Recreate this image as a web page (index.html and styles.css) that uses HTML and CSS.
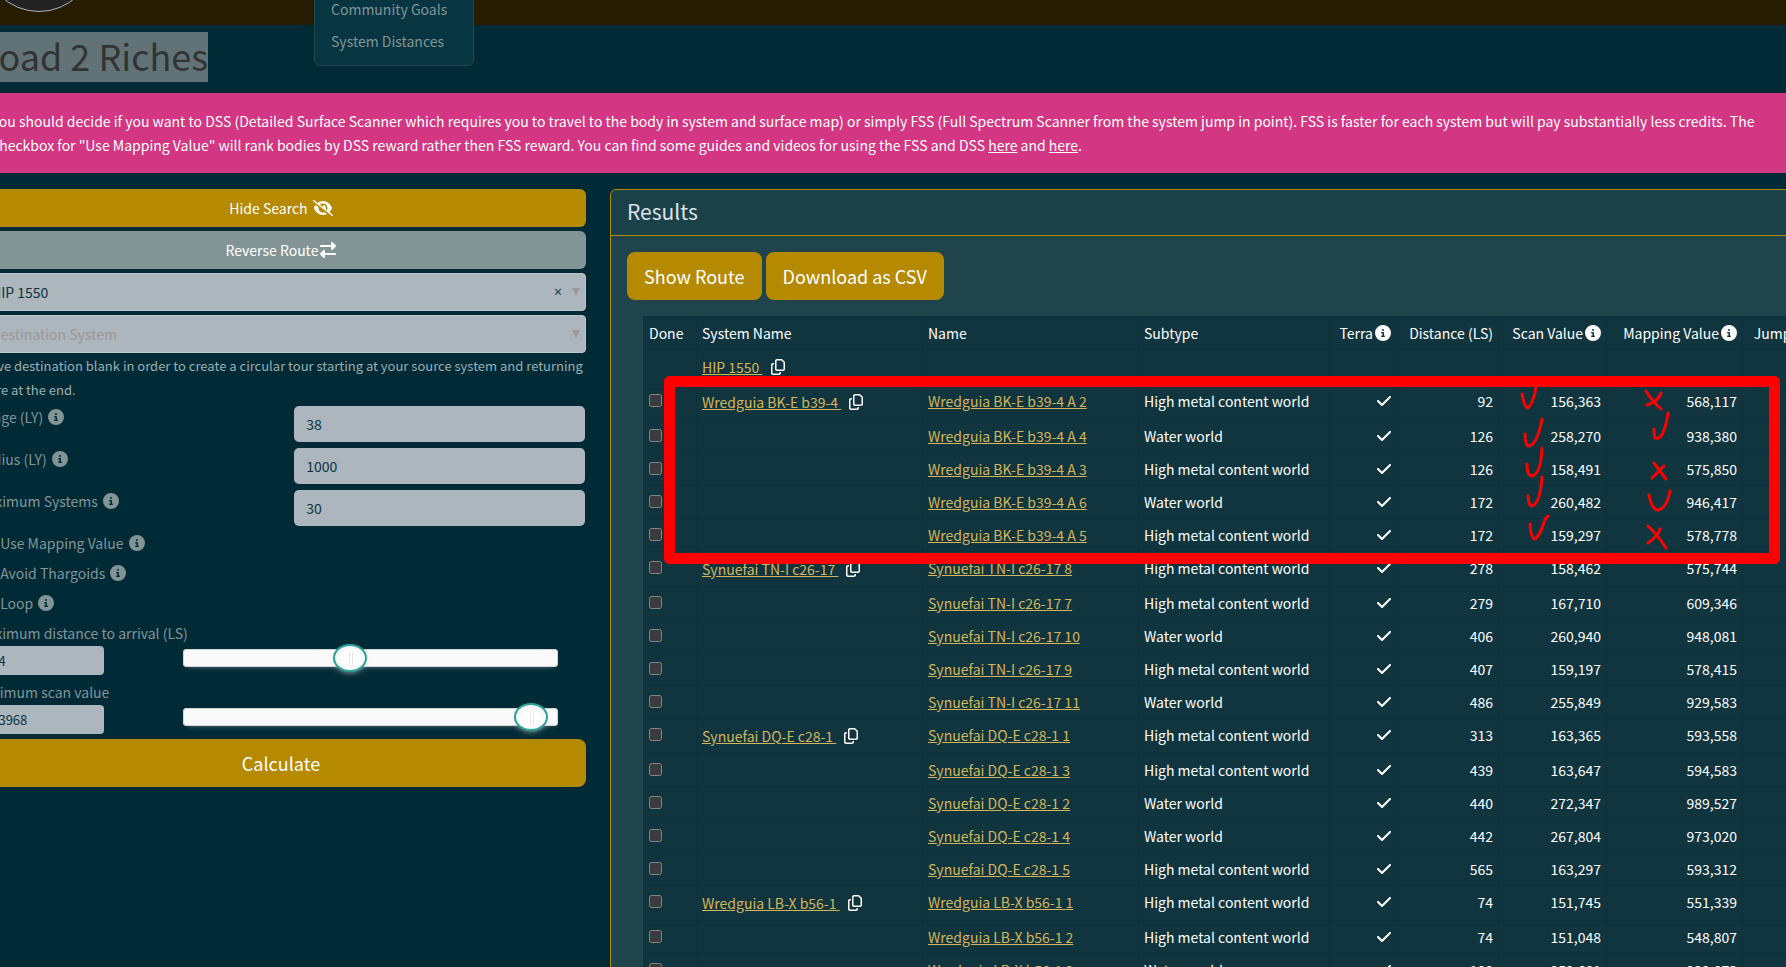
FILE: index.html
```html
<!DOCTYPE html>
<html lang="en">
<head>
  <meta charset="UTF-8">
  <meta name="viewport" content="width=device-width, initial-scale=1.0">
  <title>Road 2 Riches</title>
  <link rel="stylesheet" href="styles.css">
</head>
<body>
  <svg class="sprite" aria-hidden="true">
    <symbol id="info" viewBox="0 0 512 512"><path d="M256 512A256 256 0 1 0 256 0a256 256 0 1 0 0 512zM216 336h24V272H216c-13.300 0-24-10.700-24-24s10.700-24 24-24h48c13.300 0 24 10.700 24 24v88h8c13.300 0 24 10.700 24 24s-10.700 24-24 24H216c-13.300 0-24-10.700-24-24s10.700-24 24-24zm40-208a32 32 0 1 1 0 64 32 32 0 1 1 0-64z"/></symbol>
    <symbol id="check" viewBox="0 0 448 512"><path d="M438.600 105.400c12.500 12.500 12.500 32.800 0 45.300l-256 256c-12.500 12.500-32.800 12.500-45.300 0l-128-128c-12.500-12.500-12.500-32.800 0-45.300s32.800-12.500 45.300 0L160 338.700 393.400 105.400c12.500-12.500 32.800-12.500 45.300 0z"/></symbol>
    <symbol id="copy" viewBox="0 0 448 512"><path d="M384 336H192c-8.800 0-16-7.200-16-16V64c0-8.800 7.200-16 16-16l140.100 0L400 115.900V320c0 8.800-7.200 16-16 16zM192 384H384c35.300 0 64-28.700 64-64V115.900c0-12.700-5.100-24.900-14.100-33.900L366.100 14.100c-9-9-21.200-14.100-33.900-14.100H192c-35.300 0-64 28.700-64 64V320c0 35.300 28.700 64 64 64zM64 128c-35.300 0-64 28.700-64 64V448c0 35.300 28.700 64 64 64H256c35.300 0 64-28.700 64-64V416H272v32c0 8.800-7.200 16-16 16H64c-8.800 0-16-7.200-16-16V192c0-8.800 7.200-16 16-16H96V128H64z"/></symbol>
    <symbol id="eye-slash" viewBox="0 0 640 512"><path d="M38.800 5.100C28.400-3.100 13.300-1.200 5.100 9.200S-1.200 34.700 9.200 42.900l592 464c10.400 8.200 25.500 6.300 33.700-4.100s6.300-25.500-4.100-33.700L525.600 386.700c39.600-40.600 66.400-86.100 79.900-118.400c3.300-7.900 3.300-16.700 0-24.600c-14.900-35.700-46.200-87.700-93-131.100C465.500 68.800 400.800 32 320 32c-68.200 0-125 26.300-169.300 60.800L38.800 5.100zM223.100 149.500C248.600 126.200 282.700 112 320 112c79.500 0 144 64.500 144 144c0 24.900-6.300 48.300-17.400 68.700L408 294.500c8.400-19.300 10.600-41.400 4.800-63.300c-11.100-41.500-47.800-69.400-88.600-71.100c-5.800-.2-9.200 6.100-7.400 11.700c2.100 6.400 3.300 13.200 3.300 20.300c0 10.200-2.400 19.800-6.600 28.300l-90.300-70.800zM373 389.900c-16.400 6.500-34.300 10.100-53 10.100c-79.500 0-144-64.500-144-144c0-6.900 .5-13.600 1.400-20.200L83.100 161.500C60.300 191.200 44 220.800 34.500 243.700c-3.300 7.900-3.300 16.700 0 24.600c14.900 35.700 46.200 87.700 93 131.100C174.500 443.200 239.200 480 320 480c47.800 0 89.900-12.900 126.200-32.500L373 389.900z"/></symbol>
    <symbol id="swap" viewBox="0 0 512 512"><path d="M32 96l320 0V32c0-12.900 7.800-24.600 19.800-29.600s25.700-2.200 34.900 6.900l96 96c6 6 9.400 14.100 9.400 22.600s-3.400 16.600-9.400 22.600l-96 96c-9.200 9.200-22.900 11.900-34.900 6.900s-19.800-16.600-19.800-29.600V160L32 160c-17.700 0-32-14.300-32-32s14.300-32 32-32zM480 352c17.700 0 32 14.300 32 32s-14.300 32-32 32H160v64c0 12.900-7.800 24.600-19.800 29.600s-25.700 2.200-34.900-6.900l-96-96c-6-6-9.400-14.100-9.400-22.600s3.400-16.600 9.400-22.600l96-96c9.200-9.200 22.900-11.900 34.900-6.900s19.800 16.600 19.800 29.600l0 64H480z"/></symbol>
    <symbol id="caret" viewBox="0 0 8 8"><path d="M0 0h8L4 8z"/></symbol>
  </svg>

  <div class="page">
    <header class="navbar">
      <div class="logo"></div>
    </header>

    <main class="container">
      <h1><span class="selected">Road 2 Riches</span></h1>

      <div class="alert">
        You should decide if you want to DSS (Detailed Surface Scanner which requires you to travel to the body in system and surface map) or simply FSS (Full Spectrum Scanner from the system jump in point). FSS is faster for each system but will pay substantially less credits. The<br>
        checkbox for "Use Mapping Value" will rank bodies by DSS reward rather then FSS reward. You can find some guides and videos for using the FSS and DSS <a href="#">here</a> and <a href="#">here</a>.
      </div>

      <div class="columns">
        <form class="search">
          <button type="button" class="btn">Hide Search <svg class="icon eye"><use href="#eye-slash"/></svg></button>
          <button type="button" class="btn btn-secondary">Reverse Route<svg class="icon"><use href="#swap"/></svg></button>
          <div class="picker">
            <select aria-label="Source System"><option>HIP 1550</option></select>
            <button type="button" class="clear" aria-label="Clear">×</button>
            <svg class="caret"><use href="#caret"/></svg>
          </div>
          <div class="picker">
            <select class="empty" aria-label="Destination System"><option>Destination System</option></select>
            <svg class="caret"><use href="#caret"/></svg>
          </div>
          <p class="note">Leave destination blank in order to create a circular tour starting at your source system and returning<br>there at the end.</p>

          <div class="field">
            <label for="range">Range (LY) <svg class="icon"><use href="#info"/></svg></label>
            <input type="text" id="range" value="38">
          </div>
          <div class="field">
            <label for="radius">Radius (LY) <svg class="icon"><use href="#info"/></svg></label>
            <input type="text" id="radius" value="1000">
          </div>
          <div class="field">
            <label for="systems">Maximum Systems <svg class="icon"><use href="#info"/></svg></label>
            <input type="text" id="systems" value="30">
          </div>

          <div class="checks">
            <label><input type="checkbox"> Use Mapping Value <svg class="icon"><use href="#info"/></svg></label>
            <label><input type="checkbox"> Avoid Thargoids <svg class="icon"><use href="#info"/></svg></label>
            <label><input type="checkbox"> Loop <svg class="icon"><use href="#info"/></svg></label>
          </div>

          <div class="slider">
            <label for="distance">Maximum distance to arrival (LS)</label>
            <input type="text" id="distance" value="894">
            <input type="range" aria-label="Maximum distance to arrival" value="44">
          </div>
          <div class="slider">
            <label for="scan">Minimum scan value</label>
            <input type="text" id="scan" value="143968">
            <input type="range" aria-label="Minimum scan value" value="97">
          </div>
          <button type="button" class="btn btn-lg">Calculate</button>
        </form>

        <section class="card">
          <h2>Results</h2>
          <div class="card-body">
            <div class="actions">
              <button type="button" class="btn btn-lg">Show Route</button>
              <button type="button" class="btn btn-lg">Download as CSV</button>
            </div>
            <table class="results">
              <colgroup>
                <col class="c-done"><col class="c-system"><col class="c-name"><col class="c-type"><col class="c-terra"><col class="c-dist"><col class="c-scan"><col class="c-map"><col class="c-jumps">
              </colgroup>
              <thead>
                <tr>
                  <th>Done</th>
                  <th>System Name</th>
                  <th>Name</th>
                  <th>Subtype</th>
                  <th class="num">Terra<svg class="icon"><use href="#info"/></svg></th>
                  <th class="num">Distance (LS)</th>
                  <th class="num">Scan Value<svg class="icon"><use href="#info"/></svg></th>
                  <th class="num">Mapping Value<svg class="icon"><use href="#info"/></svg></th>
                  <th class="num">Jumps<svg class="icon"><use href="#info"/></svg></th>
                </tr>
              </thead>
              <tbody>
                <tr class="system"><td></td><td><a href="#">HIP 1550 </a><svg class="copy"><use href="#copy"/></svg></td><td></td><td></td><td></td><td></td><td></td><td></td><td></td></tr>
                <tr class="system"><td><input type="checkbox" aria-label="Done"></td><td><a href="#">Wredguia BK-E b39-4 </a><svg class="copy"><use href="#copy"/></svg></td><td><a href="#">Wredguia BK-E b39-4 A 2</a></td><td>High metal content world</td><td class="num"><svg class="tick"><use href="#check"/></svg></td><td class="num">92</td><td class="num">156,363</td><td class="num">568,117</td><td></td></tr>
                <tr><td><input type="checkbox" aria-label="Done"></td><td></td><td><a href="#">Wredguia BK-E b39-4 A 4</a></td><td>Water world</td><td class="num"><svg class="tick"><use href="#check"/></svg></td><td class="num">126</td><td class="num">258,270</td><td class="num">938,380</td><td></td></tr>
                <tr><td><input type="checkbox" aria-label="Done"></td><td></td><td><a href="#">Wredguia BK-E b39-4 A 3</a></td><td>High metal content world</td><td class="num"><svg class="tick"><use href="#check"/></svg></td><td class="num">126</td><td class="num">158,491</td><td class="num">575,850</td><td></td></tr>
                <tr><td><input type="checkbox" aria-label="Done"></td><td></td><td><a href="#">Wredguia BK-E b39-4 A 6</a></td><td>Water world</td><td class="num"><svg class="tick"><use href="#check"/></svg></td><td class="num">172</td><td class="num">260,482</td><td class="num">946,417</td><td></td></tr>
                <tr><td><input type="checkbox" aria-label="Done"></td><td></td><td><a href="#">Wredguia BK-E b39-4 A 5</a></td><td>High metal content world</td><td class="num"><svg class="tick"><use href="#check"/></svg></td><td class="num">172</td><td class="num">159,297</td><td class="num">578,778</td><td></td></tr>
                <tr class="system"><td><input type="checkbox" aria-label="Done"></td><td><a href="#">Synuefai TN-I c26-17 </a><svg class="copy"><use href="#copy"/></svg></td><td><a href="#">Synuefai TN-I c26-17 8</a></td><td>High metal content world</td><td class="num"><svg class="tick"><use href="#check"/></svg></td><td class="num">278</td><td class="num">158,462</td><td class="num">575,744</td><td></td></tr>
                <tr><td><input type="checkbox" aria-label="Done"></td><td></td><td><a href="#">Synuefai TN-I c26-17 7</a></td><td>High metal content world</td><td class="num"><svg class="tick"><use href="#check"/></svg></td><td class="num">279</td><td class="num">167,710</td><td class="num">609,346</td><td></td></tr>
                <tr><td><input type="checkbox" aria-label="Done"></td><td></td><td><a href="#">Synuefai TN-I c26-17 10</a></td><td>Water world</td><td class="num"><svg class="tick"><use href="#check"/></svg></td><td class="num">406</td><td class="num">260,940</td><td class="num">948,081</td><td></td></tr>
                <tr><td><input type="checkbox" aria-label="Done"></td><td></td><td><a href="#">Synuefai TN-I c26-17 9</a></td><td>High metal content world</td><td class="num"><svg class="tick"><use href="#check"/></svg></td><td class="num">407</td><td class="num">159,197</td><td class="num">578,415</td><td></td></tr>
                <tr><td><input type="checkbox" aria-label="Done"></td><td></td><td><a href="#">Synuefai TN-I c26-17 11</a></td><td>Water world</td><td class="num"><svg class="tick"><use href="#check"/></svg></td><td class="num">486</td><td class="num">255,849</td><td class="num">929,583</td><td></td></tr>
                <tr class="system"><td><input type="checkbox" aria-label="Done"></td><td><a href="#">Synuefai DQ-E c28-1 </a><svg class="copy"><use href="#copy"/></svg></td><td><a href="#">Synuefai DQ-E c28-1 1</a></td><td>High metal content world</td><td class="num"><svg class="tick"><use href="#check"/></svg></td><td class="num">313</td><td class="num">163,365</td><td class="num">593,558</td><td></td></tr>
                <tr><td><input type="checkbox" aria-label="Done"></td><td></td><td><a href="#">Synuefai DQ-E c28-1 3</a></td><td>High metal content world</td><td class="num"><svg class="tick"><use href="#check"/></svg></td><td class="num">439</td><td class="num">163,647</td><td class="num">594,583</td><td></td></tr>
                <tr><td><input type="checkbox" aria-label="Done"></td><td></td><td><a href="#">Synuefai DQ-E c28-1 2</a></td><td>Water world</td><td class="num"><svg class="tick"><use href="#check"/></svg></td><td class="num">440</td><td class="num">272,347</td><td class="num">989,527</td><td></td></tr>
                <tr><td><input type="checkbox" aria-label="Done"></td><td></td><td><a href="#">Synuefai DQ-E c28-1 4</a></td><td>Water world</td><td class="num"><svg class="tick"><use href="#check"/></svg></td><td class="num">442</td><td class="num">267,804</td><td class="num">973,020</td><td></td></tr>
                <tr><td><input type="checkbox" aria-label="Done"></td><td></td><td><a href="#">Synuefai DQ-E c28-1 5</a></td><td>High metal content world</td><td class="num"><svg class="tick"><use href="#check"/></svg></td><td class="num">565</td><td class="num">163,297</td><td class="num">593,312</td><td></td></tr>
                <tr class="system"><td><input type="checkbox" aria-label="Done"></td><td><a href="#">Wredguia LB-X b56-1 </a><svg class="copy"><use href="#copy"/></svg></td><td><a href="#">Wredguia LB-X b56-1 1</a></td><td>High metal content world</td><td class="num"><svg class="tick"><use href="#check"/></svg></td><td class="num">74</td><td class="num">151,745</td><td class="num">551,339</td><td></td></tr>
                <tr><td><input type="checkbox" aria-label="Done"></td><td></td><td><a href="#">Wredguia LB-X b56-1 2</a></td><td>High metal content world</td><td class="num"><svg class="tick"><use href="#check"/></svg></td><td class="num">74</td><td class="num">151,048</td><td class="num">548,807</td><td></td></tr>
                <tr><td><input type="checkbox" aria-label="Done"></td><td></td><td><a href="#">Wredguia LB-X b56-1 3</a></td><td>Water world</td><td class="num"><svg class="tick"><use href="#check"/></svg></td><td class="num">100</td><td class="num">259,681</td><td class="num">929,873</td><td></td></tr>
              </tbody>
            </table>
          </div>
        </section>
      </div>
    </main>
  </div>

  <nav class="dropdown">
    <a href="#">Community Goals</a>
    <a href="#">System Distances</a>
  </nav>

  <!-- Red marker drawing over the first system -->
  <svg class="marker" viewBox="0 0 1116 188">
    <rect x="5.500" y="5.500" width="1105" height="177" stroke-width="11"/>
    <g stroke-width="3">
      <path d="M858 18q2 11 5 14q5-1 9-20"/>
      <path d="M861 58q0 10 3 12q9 0 14-27"/>
      <path d="M863 88q0 12 5 12q9-2 10-28"/>
      <path d="M864 120q1 11 4 10q8-2 10-29"/>
      <path d="M866 148q1 15 5 15q5-4 8-14q2-7 5-9"/>
      <path d="M982 15q6 10 15 18M997 17q-3 9-14 12"/>
      <path d="M990 53q0 9 1 9q9 3 13-25"/>
      <path d="M990 87l12 16M1000 90l-12 12"/>
      <path d="M985 119q3 15 9 15q9-2 12-19"/>
      <path d="M984 150q9 8 18 22M996 153q-1 6-12 14"/>
    </g>
  </svg>
</body>
</html>
```

FILE: styles.css
```css
* {
  box-sizing: border-box;
}

body {
  position: relative;
  height: 100vh;
  margin: 0;
  overflow: hidden;
  background: #002b36;
  color: #839496;
  font-family: "Noto Sans CJK SC", sans-serif;
  font-size: 14px;
  line-height: 24px;
}

button, input, select {
  font: inherit;
}

a {
  color: inherit;
}

svg {
  fill: currentColor;
}

.sprite {
  display: none;
}

.icon {
  width: 16px;
  height: 16px;
  margin-left: 2px;
  vertical-align: -2px;
}

.icon.eye {
  width: 20px;
}

/* The page is scrolled a little to the right and down */
.page {
  width: calc(100% + 117px);
  margin-left: -36px;
}

.navbar {
  margin-top: -111px;
  padding: 0 19px 13px;
  background: #261c00;
}

.logo {
  width: 112px;
  height: 123px;
  border: 1px solid #adb5bd;
  border-radius: 56px;
  background: #222;
}

.dropdown {
  position: absolute;
  top: -16px;
  left: 314px;
  width: 160px;
  padding: 8px 0;
  border: 1px solid #204851;
  border-radius: 6px;
  background: #073642;
}

.dropdown a {
  display: block;
  padding: 4px 16px;
  text-decoration: none;
}

.container {
  padding: 7px 12px 0;
}

h1 {
  margin: 0 0 11px;
  color: #333;
  font-size: 36px;
  font-weight: 400;
  line-height: 46px;
}

.selected {
  display: inline-block;
  padding-bottom: 4px;
  background: #617377;
  vertical-align: top;
}

.alert {
  margin-bottom: 16px;
  padding: 16px;
  background: #d33682;
  color: #fff;
  white-space: nowrap;
}

.columns {
  display: grid;
  grid-template-columns: 1fr 2fr;
  gap: 24px;
}

/* Search form */
.btn {
  height: 38px;
  padding: 0 16px;
  border: 0;
  border-radius: 6px;
  background: #b58900;
  color: #fff;
}

.btn-secondary {
  background: #839496;
}

.btn-lg {
  height: 48px;
  padding: 0 17px 1px;
  border-radius: 8px;
  font-size: 18px;
}

.search .btn {
  display: block;
  width: 100%;
  margin-bottom: 4px;
}

.picker {
  display: grid;
  grid-template-columns: 1fr auto 14px;
  align-items: center;
  margin-bottom: 4px;
}

.picker select {
  grid-area: 1 / 1 / 2 / 4;
  height: 38px;
  padding: 0 14px;
  border: 1px solid #bcc4cc;
  border-radius: 4px;
  appearance: none;
  background: #adb5bd;
  color: #073642;
}

.picker .empty {
  color: #999;
}

.clear {
  grid-area: 1 / 2;
  margin-right: 4px;
  border: 0;
  background: none;
  color: #073642;
  font-family: "Open Sans", sans-serif;
}

.caret {
  grid-area: 1 / 3;
  width: 8px;
  height: 8px;
  fill: #999;
}

.note {
  margin: -3px 0 3px;
  color: #9caeb3;
  font-size: 13px;
  line-height: 24px;
}

.field {
  display: grid;
  grid-template-columns: 52% 48%;
  margin-bottom: 4px;
}

.field input,
.slider input[type=text] {
  width: 100%;
  height: 38px;
  padding: 0 12px;
  border: 1px solid transparent;
  border-radius: 6px;
  background: #adb5bd padding-box;
  color: #073642;
}

.checks {
  margin-top: 4px;
}

.checks label {
  display: block;
  height: 30px;
}

.checks input {
  width: 13px;
  height: 13px;
  margin: 0 8px 0 0;
  vertical-align: -1px;
}

.slider {
  display: grid;
  grid-template-columns: 128px 375fr;
  column-gap: 79px;
  align-items: start;
  margin-bottom: 5px;
  padding-right: 28px;
}

.slider label {
  grid-column: span 2;
  margin-bottom: 1px;
}

.slider input[type=text] {
  height: 29px;
  padding: 0 8px;
  border: 0;
  border-radius: 4px;
  font-size: 13px;
}

.slider input[type=range] {
  width: 100%;
  height: 18px;
  margin: 3px 0 0;
  appearance: none;
  border-radius: 4px;
  background: #fafafa;
  box-shadow: inset 0 0 0 1px #d3d3d3, 0 3px 6px -5px #bbb;
}

.slider input[type=range]::-webkit-slider-thumb {
  width: 34px;
  height: 28px;
  appearance: none;
  border: 2px solid #2aa198;
  border-radius: 50%;
  background:
    linear-gradient(#e8e7e6, #e8e7e6) 14px 6px / 1px 14px no-repeat,
    linear-gradient(#e8e7e6, #e8e7e6) 17px 6px / 1px 14px no-repeat,
    #fff;
  box-shadow: inset 0 0 1px #fff, inset 0 1px 7px #ebebeb, 0 3px 6px -3px #bbb;
}

/* Results */
.card {
  border: 1px solid #b58900;
  border-radius: 6px;
  background: #1f444b;
}

.card h2 {
  margin: 0;
  padding: 7px 16px 9px;
  border-bottom: 1px solid #b58900;
  border-radius: 6px 6px 0 0;
  background: #1a4048;
  color: #dee2e6;
  font-size: 21px;
  font-weight: 400;
  line-height: 29px;
}

.card-body {
  padding: 16px;
}

.actions {
  display: flex;
  gap: 4px;
  margin-bottom: 16px;
}

.results {
  width: calc(100% - 32px);
  margin: 0 16px;
  border-collapse: collapse;
  table-layout: fixed;
  background: #10353f;
  color: #fff;
}

.results th,
.results td {
  height: 33px;
  padding: 4px 5px;
  border: 1px solid #0d323d;
  font-weight: 400;
  text-align: left;
  vertical-align: top;
  white-space: nowrap;
}

.results .system td {
  height: 35px;
}

.results .system td:nth-child(2) {
  padding-top: 5px;
}

.results .num {
  text-align: right;
}

.results a {
  color: #d3b65c;
  white-space: pre;
}

.results input {
  width: 13px;
  height: 13px;
  margin: 0;
  vertical-align: 0;
  color-scheme: dark;
}

.copy,
.tick {
  width: 14px;
  height: 16px;
  vertical-align: -2px;
}

.copy {
  margin-left: 8px;
}

.c-done { width: 53px; }
.c-system { width: 226px; }
.c-name { width: 216px; }
.c-type { width: 191px; }
.c-terra { width: 67px; }
.c-dist { width: 102px; }
.c-scan { width: 108px; }
.c-map { width: 136px; }
.c-jumps { width: 79px; }

.marker {
  position: absolute;
  top: 376px;
  left: 664px;
  width: 1116px;
  height: 188px;
  fill: none;
  stroke: red;
  stroke-linecap: round;
  stroke-linejoin: round;
  pointer-events: none;
}
```
